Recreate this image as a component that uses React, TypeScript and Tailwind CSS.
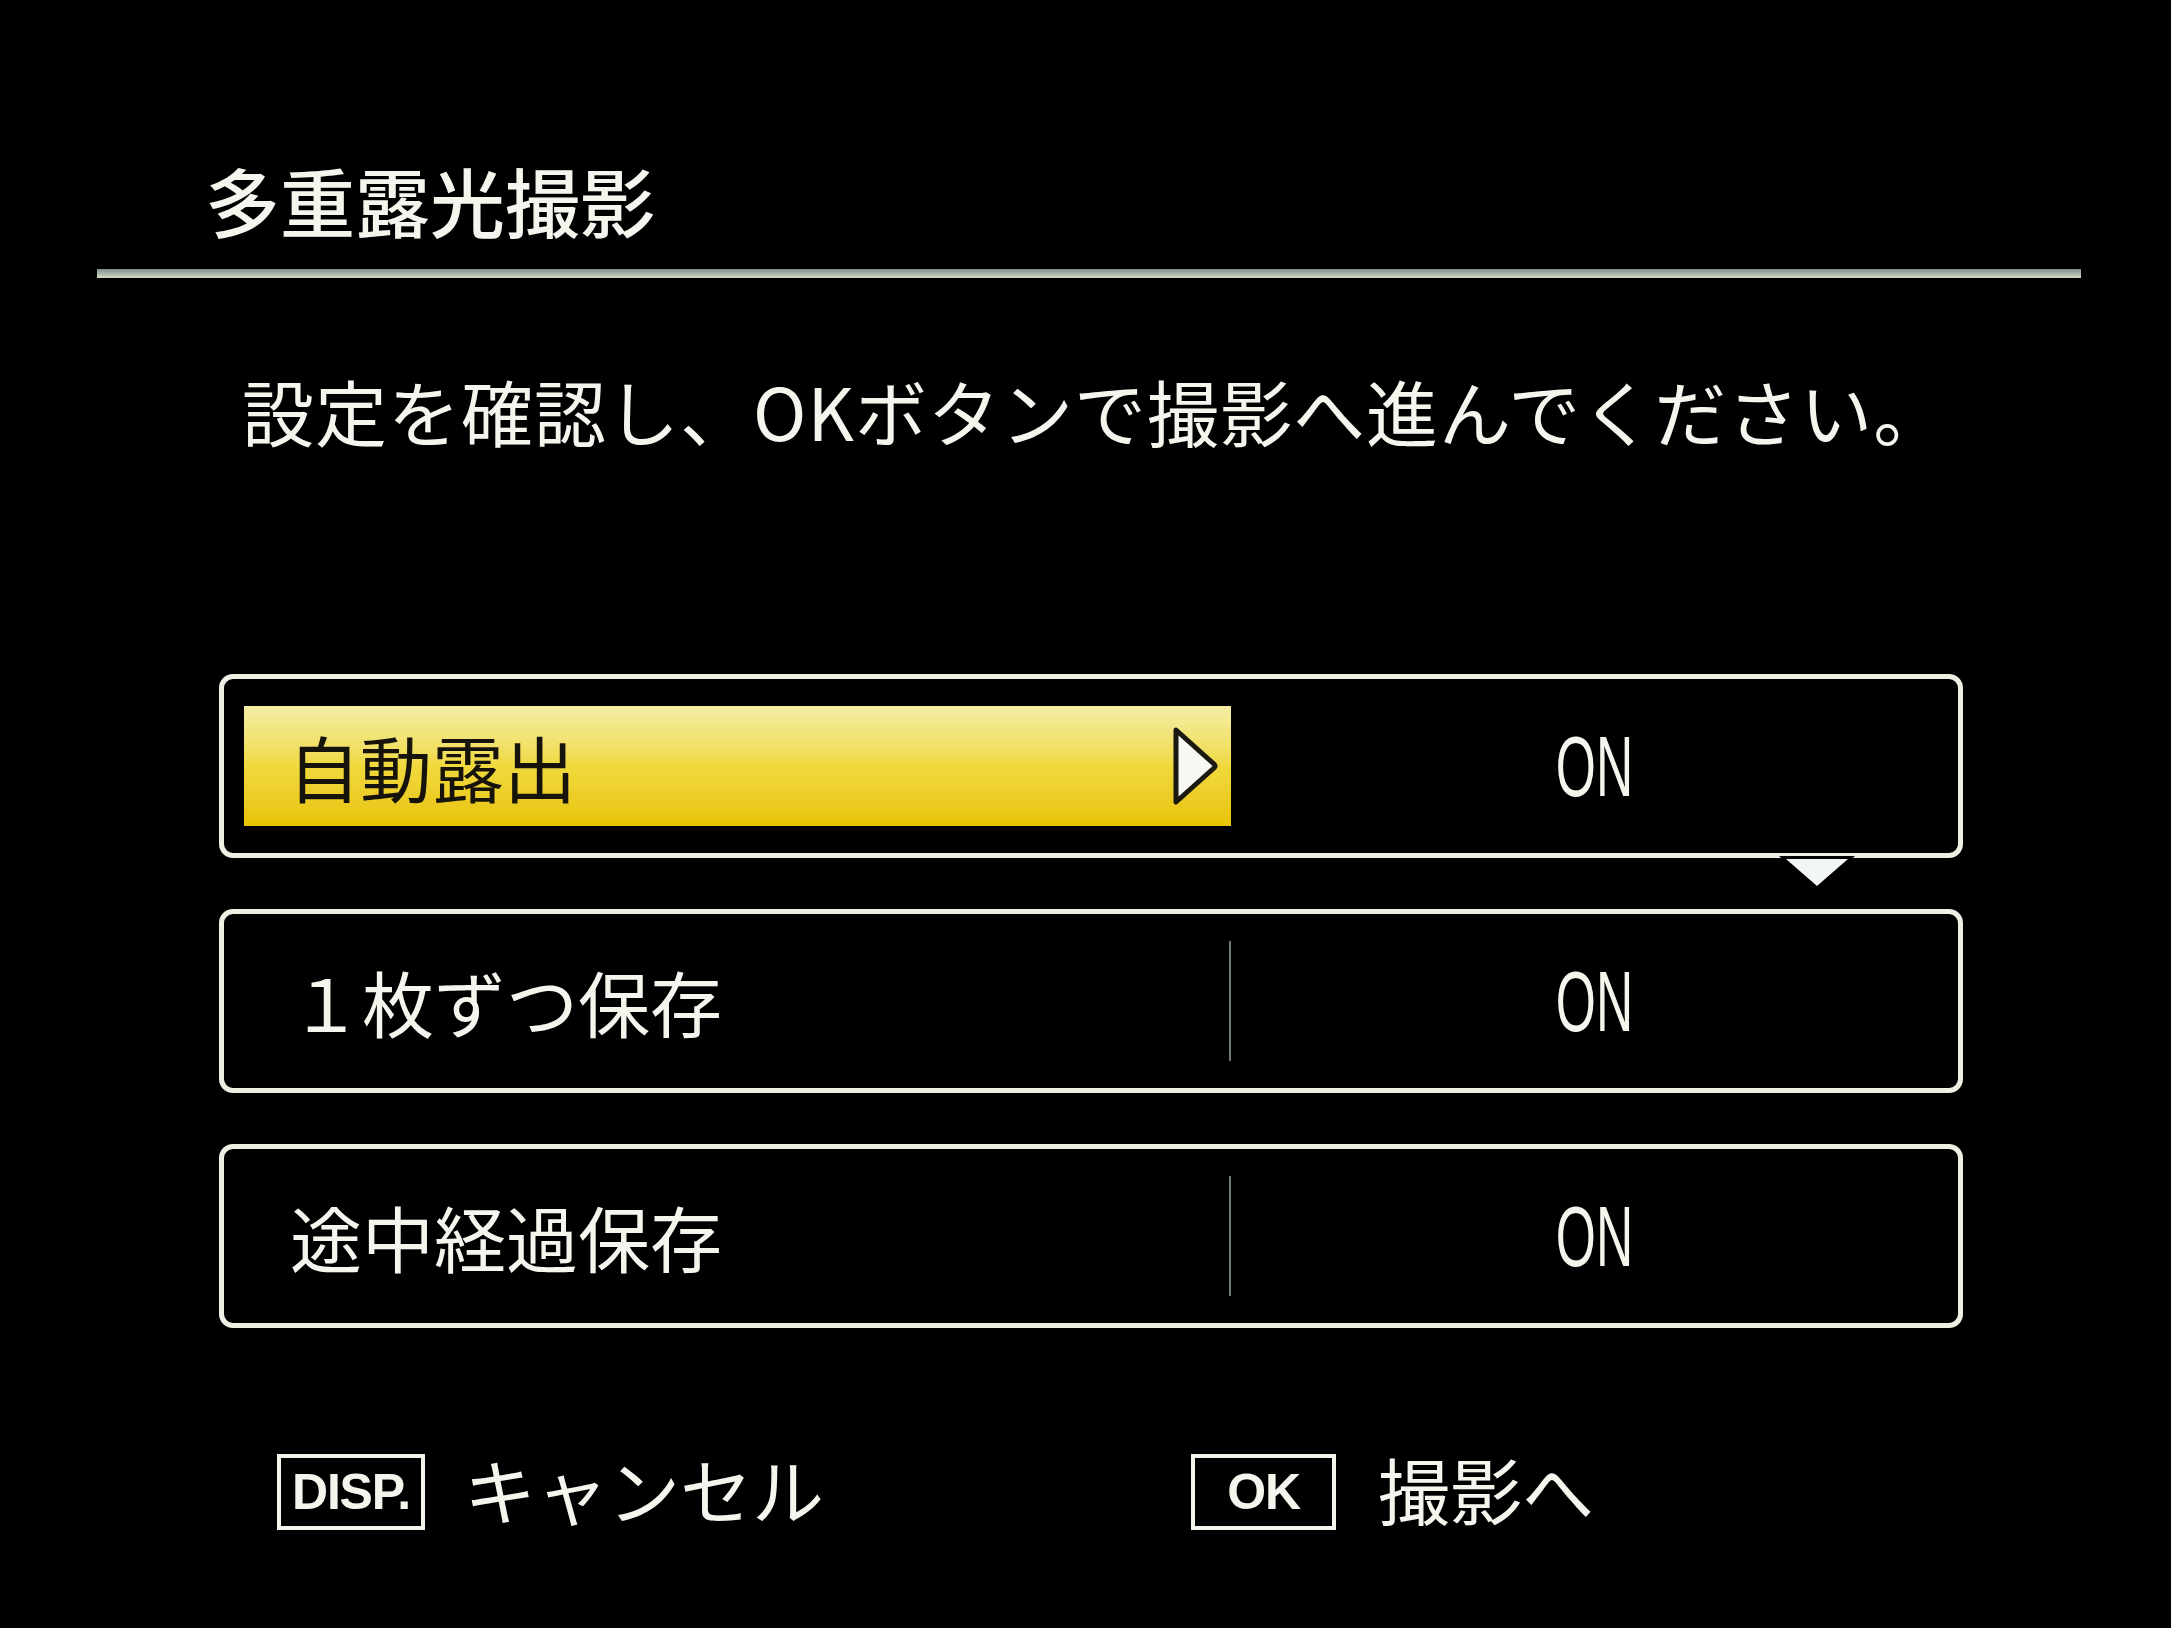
const jp = { fontFamily: '"Noto Sans CJK JP", "Noto Sans", sans-serif' };

type Row = { label: string; value: string; active?: boolean };

const rows: Row[] = [
  { label: "自動露出", value: "ON", active: true },
  { label: "１枚ずつ保存", value: "ON" },
  { label: "途中経過保存", value: "ON" },
];

function RightArrow() {
  return (
    <svg width="48" height="80" viewBox="0 0 48 80" className="shrink-0">
      <path
        d="M5 4 L43 38 Q45 40 43 42 L5 76 Z"
        fill="#f7f8f4"
        stroke="#1c1a10"
        strokeWidth="5"
        strokeLinejoin="round"
      />
    </svg>
  );
}

function DownMarker() {
  return (
    <svg
      width="82"
      height="40"
      viewBox="0 0 82 40"
      className="absolute left-[1552px] top-[174px]"
    >
      <path d="M3 3 L79 3 L41 38 Z" fill="#000" />
      <path d="M10 6 L72 6 L41 33 Z" fill="#f2f6f4" />
    </svg>
  );
}

function SettingRow({ row }: { row: Row }) {
  return (
    <div className="relative flex h-[184px] rounded-[14px] border-[5px] border-[#eef0e4] py-[27px] pl-[20px]">
      {row.active ? (
        <div className="flex w-[987px] items-center justify-between bg-linear-to-b from-[#f4eea4] via-[#f0d93c] to-[#e9c300] pl-[44px] pr-[12px]">
          <span className="text-[72px] leading-none text-[#16130a]">{row.label}</span>
          <RightArrow />
        </div>
      ) : (
        <div className="flex w-[987px] items-center border-r-[2px] border-[#6c7c72] pl-[46px]">
          <span className="text-[72px] leading-none text-[#f4f6ee]">{row.label}</span>
        </div>
      )}
      <div className="flex flex-1 items-center justify-center">
        <span
          className="inline-block origin-center scale-x-[0.6] text-[86px] leading-none text-[#f4f6ee]"
          style={{ fontFamily: '"Liberation Sans", Arial, sans-serif' }}
        >
          {row.value}
        </span>
      </div>
      {row.active && <DownMarker />}
    </div>
  );
}

function KeyBox({ children, w }: { children: string; w: string }) {
  return (
    <div
      className={`flex h-[76px] ${w} items-center justify-center border-[4px] border-[#f4f4ec] text-[#f4f6ee]`}
    >
      <span
        className="text-[50px] font-bold leading-none tracking-tight"
        style={{ fontFamily: '"Liberation Sans", Arial, sans-serif' }}
      >
        {children}
      </span>
    </div>
  );
}

export default function App() {
  return (
    <div className="h-[1628px] w-[2171px] overflow-hidden bg-black" style={jp}>
      <div className="flex flex-col">
        <h1 className="ml-[205px] mt-[162px] h-[76px] text-[75px] font-medium leading-none text-[#f4f6ee]">
          多重露光撮影
        </h1>
        <div className="ml-[97px] mt-[31px] h-[9px] w-[1984px] bg-linear-to-b from-[#7f9088] via-[#a9b6aa] to-[#d8dcc8]" />
        <p className="ml-[242px] mt-[96px] h-[72px] text-[72px] leading-none tracking-[1px] text-[#f4f6ee]">
          設定を確認し、OKボタンで撮影へ進んでください。
        </p>
        <div className="ml-[219px] mt-[228px] flex w-[1744px] flex-col gap-[51px]">
          {rows.map((r) => (
            <SettingRow key={r.label} row={r} />
          ))}
        </div>
        <div className="ml-[277px] mt-[126px] flex items-center">
          <div className="flex w-[914px] items-center gap-[39px]">
            <KeyBox w="w-[148px]">DISP.</KeyBox>
            <span className="-mt-[8px] text-[72px] leading-none text-[#f4f6ee]">キャンセル</span>
          </div>
          <div className="flex items-center gap-[42px]">
            <KeyBox w="w-[145px]">OK</KeyBox>
            <span className="-mt-[8px] text-[72px] leading-none text-[#f4f6ee]">撮影へ</span>
          </div>
        </div>
      </div>
    </div>
  );
}
